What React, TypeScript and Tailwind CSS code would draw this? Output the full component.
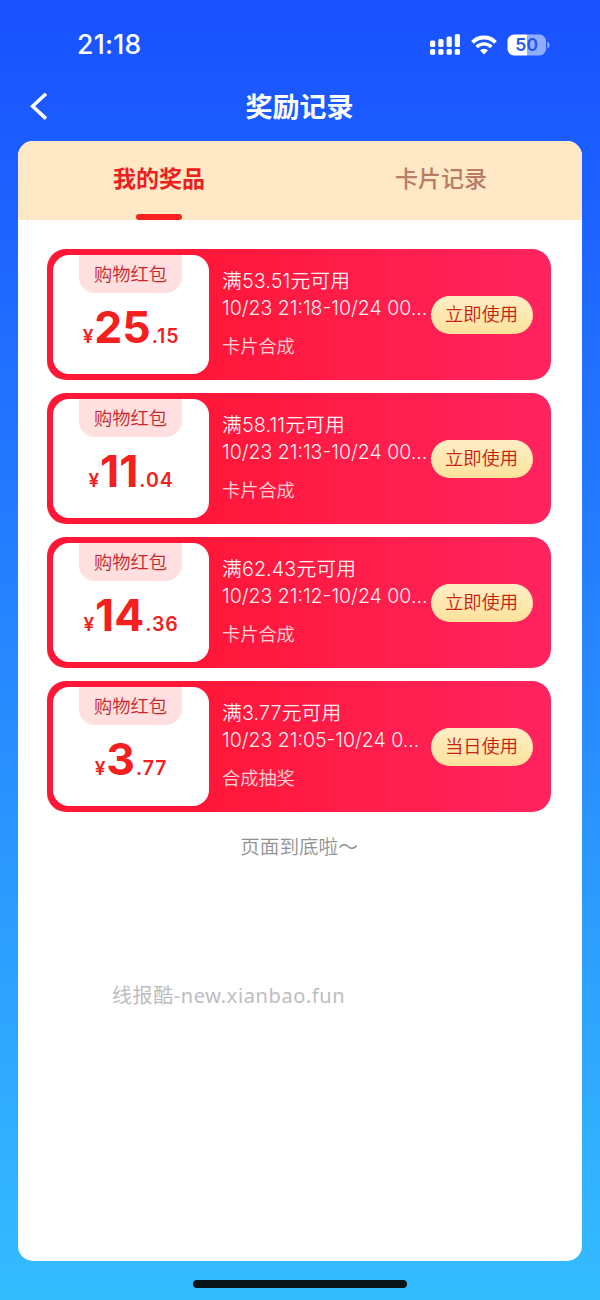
import { useState } from "react"

const TABS = ["我的奖品", "卡片记录"]

const COUPONS = [
  { whole: "25", cents: ".15", limit: "满53.51元可用", time: "10/23 21:18-10/24 00...", source: "卡片合成", action: "立即使用" },
  { whole: "11", cents: ".04", limit: "满58.11元可用", time: "10/23 21:13-10/24 00...", source: "卡片合成", action: "立即使用" },
  { whole: "14", cents: ".36", limit: "满62.43元可用", time: "10/23 21:12-10/24 00...", source: "卡片合成", action: "立即使用" },
  { whole: "3", cents: ".77", limit: "满3.77元可用", time: "10/23 21:05-10/24 0...", source: "合成抽奖", action: "当日使用" }
]

function StatusBar() {
  return (
    <div className="flex h-[72px] items-center justify-between pt-[17px] pr-[50px] pl-[77px] text-white">
      <span className="text-[26.5px] leading-none font-medium tracking-[0.3px]">21:18</span>
      <div className="flex items-center">
        <svg width="30" height="21" viewBox="0 0 30 21" fill="currentColor">
          <rect x="0" y="6.6" width="5.2" height="6.4" rx="1.5" />
          <rect x="8.3" y="5" width="5.2" height="8" rx="1.5" />
          <rect x="16.6" y="2.6" width="5.2" height="10.4" rx="1.5" />
          <rect x="24.8" y="0" width="5.2" height="13" rx="1.5" />
          <rect x="0" y="15" width="5.2" height="5.8" rx="1.5" />
          <rect x="8.3" y="15" width="5.2" height="5.8" rx="1.5" />
          <rect x="16.6" y="15" width="5.2" height="5.8" rx="1.5" />
          <rect x="24.8" y="15" width="5.2" height="5.8" rx="1.5" />
        </svg>
        <svg className="ml-[11px]" width="26" height="20" viewBox="0 0 26 20">
          <path d="M1.5 7.3a16.2 16.2 0 0 1 23 0" fill="none" stroke="currentColor" strokeWidth="3.8" />
          <path d="M5.6 12a10.4 10.4 0 0 1 14.8 0" fill="none" stroke="currentColor" strokeWidth="3.4" />
          <path d="M13 19.6l-4-4.3a5.8 5.8 0 0 1 8 0z" fill="currentColor" />
        </svg>
        <svg className="ml-[10px]" width="43" height="22" viewBox="0 0 43 22">
          <path d="M7 0.5h13v21H7a6.5 6.5 0 0 1-6.5-6.5V7A6.5 6.5 0 0 1 7 0.5z" fill="#fff" />
          <path d="M20 0.5h12.5a6.5 6.5 0 0 1 6.5 6.5v8a6.500 6.500 0 0 1-6.500 6.500H20z" fill="#91adff" />
          <path d="M40.3 7.5c3 1.4 3 5.6 0 7z" fill="#91adff" />
          <text x="8.2" y="17.3" fontFamily="Inter" fontSize="17.5" fontWeight="600" fill="#1f57f0">5</text>
          <text x="19.5" y="17.3" fontFamily="Inter" fontSize="17.5" fontWeight="600" fill="#1f57f0">0</text>
        </svg>
      </div>
    </div>
  )
}

function Coupon({ coupon }: { coupon: (typeof COUPONS)[number] }) {
  return (
    <div className="flex h-[131px] rounded-[19px] bg-linear-to-r/srgb from-[#ff1738] from-30% to-[#ff245f] p-1.5">
      <div className="flex w-[156px] shrink-0 flex-col items-center rounded-[16px] bg-white">
        <div className="mr-px h-[38px] w-[103px] rounded-b-[16px] bg-[#ffdfdf] text-center text-[18.3px] leading-[38px] font-[350] text-[#c9242a]">
          购物红包
        </div>
        <div className="mt-[10px] flex items-baseline leading-[48px] font-bold text-[#f3201f]">
          <span className="text-[19px] font-semibold tracking-[0.8px]">¥</span>
          <span className="text-[44.5px]">{coupon.whole}</span>
          <span className="ml-[1px] text-[19.5px] font-semibold tracking-[0.9px]">{coupon.cents}</span>
        </div>
      </div>
      <div className="ml-[13px] w-[206px] shrink-0 pt-[13px] font-[350] whitespace-nowrap text-white/95">
        <div className="text-[19.8px] leading-[27px] tracking-[0.1px]">{coupon.limit}</div>
        <div className="text-[19.5px] leading-[27px]">{coupon.time}</div>
        <div className="mt-[11px] text-[18.2px] leading-[26px] text-white/80">{coupon.source}</div>
      </div>
      <button className="mt-[41px] ml-[3px] h-[38px] w-[102px] shrink-0 rounded-full bg-linear-to-b/srgb from-[#ffedc5] to-[#fee29c] pr-px text-[18.3px] leading-[36px] font-[350] text-[#c8210f]">
        <span className="block h-[38px]">{coupon.action}</span>
      </button>
    </div>
  )
}

export default function RewardRecords() {
  const [activeTab, setActiveTab] = useState(0)

  return (
    <div className="flex h-[1300px] w-[600px] flex-col overflow-hidden bg-linear-to-b/srgb from-[#1951ff] to-[#34bcff] font-['Inter','Noto_Sans_CJK_SC',sans-serif]">
      <StatusBar />

      {/* NAV */}
      <header className="grid h-[69px] grid-cols-[60px_1fr_60px] items-center text-white">
        <button className="pl-[30px]">
          <svg width="18" height="28" viewBox="0 0 18 28" fill="none" stroke="currentColor" strokeWidth="3.5">
            <path d="M16 0.8L2.6 13.2L16 25.6" />
          </svg>
        </button>
        <h1 className="pt-[3px] pr-px text-center text-[27px] font-bold">奖励记录</h1>
      </header>

      <main className="mx-[18px] flex h-[1120px] flex-col overflow-hidden rounded-[15px] bg-white">
        <div className="grid h-[79px] shrink-0 grid-cols-2 bg-[#fee8c5]">
          {TABS.map((tab, i) => (
            <button key={tab} onClick={() => setActiveTab(i)}
              className={`flex h-[79px] flex-col items-center justify-between pt-[21px] text-[23px] leading-[34px] ${activeTab === i ? "font-bold text-[#ec211f]" : "font-medium text-[#b77d65]"}`}>
              {tab}
              {activeTab === i && <span className="h-[6px] w-[46px] rounded-full bg-[#f5221f]" />}
            </button>
          ))}
        </div>

        {/* COUPONS */}
        <div className="mt-[29px] mr-[31px] ml-[29px] flex flex-col gap-[13px]">
          {COUPONS.map((coupon) => (
            <Coupon key={coupon.time} coupon={coupon} />
          ))}
        </div>

        <p className="mt-[21px] pr-[2px] text-center text-[19.6px] leading-[28px] font-[350] text-[#929292]">页面到底啦～</p>
        <p className="mt-[121px] ml-[94px] font-['Noto_Sans','Noto_Sans_CJK_SC',sans-serif] text-[20px] leading-[28px] tracking-[0.6px] text-[#bdbdbd]">线报酷-new.xianbao.fun</p>
      </main>

      <div className="mx-auto mt-[19px] h-[8px] w-[214px] rounded-full bg-[#091516]" />
    </div>
  )
}
